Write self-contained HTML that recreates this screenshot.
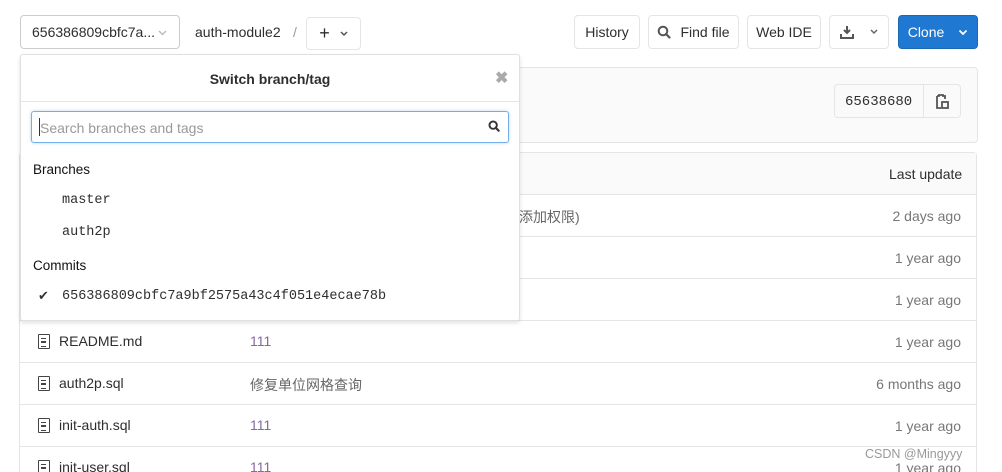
<!DOCTYPE html>
<html><head><meta charset="utf-8"><style>
*{box-sizing:border-box;margin:0;padding:0}
html,body{width:1002px;height:472px;overflow:hidden}
body{background:#fff;font-family:"Liberation Sans","Noto Sans CJK SC",sans-serif;font-size:14px;color:#2e2e2e;position:relative}
.abs{position:absolute}
.btn{position:absolute;top:15px;height:34px;border:1px solid #e5e5e5;border-radius:4px;background:#fff;display:flex;align-items:center;justify-content:center;font-size:14px;color:#2e2e2e}
.mono{font-family:"Liberation Mono","DejaVu Sans Mono",monospace}
.row{position:absolute;left:19px;width:958px;height:42px;border-top:1px solid #e5e5e5;}
.row .name{position:absolute;left:40px;top:12px}
.row .msg{position:absolute;left:231px;top:12px;color:#86699f}
.row .msg.g{color:#666}
.row .time{position:absolute;right:16px;top:13px;color:#777}
.fi{position:absolute;left:19px;top:13px;width:12px;height:15px;border:1.5px solid #444;border-radius:1px}
.fi:after{content:"";position:absolute;left:2px;top:3px;width:5px;height:7px;border-top:1.5px solid #444;border-bottom:1.5px solid #444}
.fi:before{content:"";position:absolute;left:2px;top:6px;width:5px;height:1.5px;background:#444}
</style></head><body>

<div class="btn" style="left:20px;width:160px;justify-content:flex-start;padding-left:11px;border-color:#ccc">656386809cbfc7a...<svg class="abs" style="right:12px;top:14px" width="9" height="6" viewBox="0 0 9 6"><path d="M1 1l3.5 3.5L8 1" stroke="#bbb" stroke-width="1.5" fill="none"/></svg></div>
<div class="abs" style="left:195px;top:24px">auth-module2</div>
<div class="abs" style="left:293px;top:24px;color:#999">/</div>
<div class="btn" style="left:306px;width:55px;top:17px;height:33px"><span style="font-size:18px;margin-right:10px">+</span><svg width="8" height="6" viewBox="0 0 8 6"><path d="M1 1l3 3 3-3" stroke="#555" stroke-width="1.5" fill="none"/></svg></div>

<div class="btn" style="left:574px;width:66px">History</div>
<div class="btn" style="left:648px;width:91px"><svg width="14" height="14" viewBox="0 0 14 14" style="margin-right:9px"><circle cx="6" cy="6" r="4.3" fill="none" stroke="#555" stroke-width="2"/><path d="M9 9l3.5 3.5" stroke="#555" stroke-width="2.2" stroke-linecap="round"/></svg>Find file</div>
<div class="btn" style="left:747px;width:74px">Web IDE</div>
<div class="btn" style="left:829px;width:60px"><svg width="14" height="14" viewBox="0 0 14 14" style="margin-right:16px"><path d="M7 1v7M4 5l3 3 3-3" stroke="#555" stroke-width="2" fill="none"/><path d="M1 9v4h12V9" stroke="#555" stroke-width="2" fill="none"/></svg><svg width="8" height="6" viewBox="0 0 8 6"><path d="M1 1l3 3 3-3" stroke="#666" stroke-width="1.5" fill="none"/></svg></div>
<div class="btn" style="left:898px;width:80px;background:#1f78d1;border-color:#1b69b6;color:#fff">Clone<svg width="10" height="7" viewBox="0 0 10 7" style="margin-left:14px"><path d="M1.5 1.5l3.5 3.5 3.5-3.5" stroke="#fff" stroke-width="1.8" fill="none"/></svg></div>

<div class="abs" style="left:20px;top:67px;width:958px;height:76px;background:#fafafa;border:1px solid #e5e5e5;border-radius:4px"></div>
<div class="abs" style="left:834px;top:84px;width:127px;height:34px;border:1px solid #e5e5e5;border-radius:4px;background:#fafafa"></div>
<div class="abs mono" style="left:845px;top:94px;font-size:14px;color:#2e2e2e">65638680</div>
<div class="abs" style="left:923px;top:85px;width:1px;height:32px;background:#e5e5e5"></div>
<svg class="abs" style="left:935px;top:93px" width="14" height="17" viewBox="0 0 14 17"><path d="M2 3h2v-1h4v1h2v3" fill="none" stroke="#555" stroke-width="1.8"/><path d="M2 3v12h4" fill="none" stroke="#555" stroke-width="1.8"/><rect x="7" y="9" width="6" height="6" fill="none" stroke="#555" stroke-width="1.8"/></svg>

<div class="abs" style="left:19px;top:152px;width:958px;height:330px;border:1px solid #e5e5e5;border-bottom:none;border-radius:4px 4px 0 0"></div>
<div class="abs" style="left:20px;top:153px;width:956px;height:41px;background:#fafafa"></div>
<div class="abs" style="left:889px;top:166px">Last update</div>

<div class="row" style="top:194px"><span class="abs" style="left:500px;top:12px;color:#666">添加权限)</span><span class="time">2 days ago</span></div>
<div class="row" style="top:236px"><span class="time">1 year ago</span></div>
<div class="row" style="top:278px"><span class="time">1 year ago</span></div>
<div class="row" style="top:320px"><i class="fi"></i><span class="name">README.md</span><span class="msg">111</span><span class="time">1 year ago</span></div>
<div class="row" style="top:362px"><i class="fi"></i><span class="name">auth2p.sql</span><span class="msg g">修复单位网格查询</span><span class="time">6 months ago</span></div>
<div class="row" style="top:404px"><i class="fi"></i><span class="name">init-auth.sql</span><span class="msg">111</span><span class="time">1 year ago</span></div>
<div class="row" style="top:446px"><i class="fi"></i><span class="name">init-user.sql</span><span class="msg">111</span><span class="time">1 year ago</span></div>
<div class="abs" style="left:865px;top:447px;color:#999;font-size:12.5px;background:rgba(255,255,255,0.6)">CSDN @Mingyyy</div>

<div class="abs" style="left:20px;top:54px;width:500px;height:267px;background:#fff;border:1px solid #e0e0e0;border-radius:3px;box-shadow:0 2px 4px rgba(0,0,0,0.12)">
 <div class="abs" style="left:0;top:0;width:498px;height:47px;border-bottom:1px solid #e5e5e5;text-align:center;line-height:48px;font-weight:bold;color:#2e2e2e">Switch branch/tag</div>
 <div class="abs" style="left:474px;top:13px;color:#aaa;font-size:16px;font-weight:bold">&#10006;</div>
 <div class="abs" style="left:10px;top:56px;width:478px;height:32px;border:1px solid #73afea;border-radius:3px;box-shadow:0 0 3px rgba(31,120,209,0.3)">
  <span class="abs" style="left:8px;top:8px;color:#999">Search branches and tags</span>
  <span class="abs" style="left:7px;top:6px;width:1px;height:18px;background:#333"></span>
  <svg class="abs" style="left:456px;top:8px" width="12" height="12" viewBox="0 0 14 14"><circle cx="6" cy="6" r="4.3" fill="none" stroke="#333" stroke-width="2.2"/><path d="M9 9l3.5 3.5" stroke="#333" stroke-width="2.4" stroke-linecap="round"/></svg>
 </div>
 <div class="abs" style="left:12px;top:107px;font-size:13.5px;color:#111">Branches</div>
 <div class="abs mono" style="left:41px;top:138px;font-size:13.5px">master</div>
 <div class="abs mono" style="left:41px;top:170px;font-size:13.5px">auth2p</div>
 <div class="abs" style="left:12px;top:203px;font-size:13.5px;color:#111">Commits</div>
 <div class="abs" style="left:17px;top:233px;font-size:13px;color:#333">&#10004;</div>
 <div class="abs mono" style="left:41px;top:234px;font-size:13.5px">656386809cbfc7a9bf2575a43c4f051e4ecae78b</div>
</div>
</body></html>
